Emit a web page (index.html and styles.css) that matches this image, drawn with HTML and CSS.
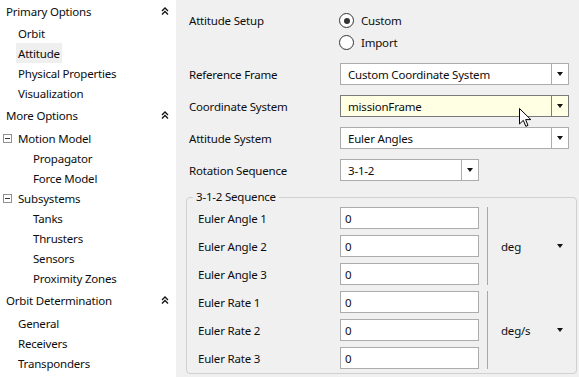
FILE: index.html
```html
<!doctype html>
<html lang="en">
<head>
  <meta charset="utf-8">
  <title>Attitude</title>
  <link rel="stylesheet" href="styles.css">
</head>
<body>
  <div class="app">
    <nav class="sidebar">
      <div class="section">
        <div class="section-head">
          <span>Primary Options</span>
          <svg class="collapse" width="8" height="8" viewBox="0 0 8 8"><path d="M1 4 L4 1 L7 4 M1 7.5 L4 4.5 L7 7.5"/></svg>
        </div>
        <div class="item"><span>Orbit</span></div>
        <div class="item active"><span>Attitude</span></div>
        <div class="item"><span>Physical Properties</span></div>
        <div class="item"><span>Visualization</span></div>
      </div>
      <div class="section">
        <div class="section-head">
          <span>More Options</span>
          <svg class="collapse" width="8" height="8" viewBox="0 0 8 8"><path d="M1 4 L4 1 L7 4 M1 7.5 L4 4.5 L7 7.5"/></svg>
        </div>
        <div class="item tree"><i class="minus"></i><span>Motion Model</span></div>
        <div class="item sub"><span>Propagator</span></div>
        <div class="item sub"><span>Force Model</span></div>
        <div class="item tree"><i class="minus"></i><span>Subsystems</span></div>
        <div class="item sub"><span>Tanks</span></div>
        <div class="item sub"><span>Thrusters</span></div>
        <div class="item sub"><span>Sensors</span></div>
        <div class="item sub"><span>Proximity Zones</span></div>
      </div>
      <div class="section">
        <div class="section-head">
          <span>Orbit Determination</span>
          <svg class="collapse" width="8" height="8" viewBox="0 0 8 8"><path d="M1 4 L4 1 L7 4 M1 7.5 L4 4.5 L7 7.5"/></svg>
        </div>
        <div class="item"><span>General</span></div>
        <div class="item"><span>Receivers</span></div>
        <div class="item"><span>Transponders</span></div>
      </div>
    </nav>

    <main class="panel">
      <div class="radio-row">
        <span class="field-label">Attitude Setup</span>
        <div class="radios">
          <div class="radio checked"><i class="circle"></i>Custom</div>
          <div class="radio"><i class="circle"></i>Import</div>
        </div>
      </div>

      <div class="field">
        <span class="field-label">Reference Frame</span>
        <div class="combo wide"><span class="value">Custom Coordinate System</span><span class="btn"><i class="arrow"></i></span></div>
      </div>
      <div class="field">
        <span class="field-label">Coordinate System</span>
        <div class="combo wide hover"><span class="value">missionFrame</span><span class="btn"><i class="arrow"></i></span></div>
      </div>
      <div class="field">
        <span class="field-label">Attitude System</span>
        <div class="combo wide"><span class="value">Euler Angles</span><span class="btn"><i class="arrow"></i></span></div>
      </div>
      <div class="field">
        <span class="field-label">Rotation Sequence</span>
        <div class="combo short"><span class="value">3-1-2</span><span class="btn"><i class="arrow"></i></span></div>
      </div>

      <fieldset class="group">
        <legend>3-1-2 Sequence</legend>
        <div class="block">
          <div class="rows">
            <div class="frow"><span>Euler Angle 1</span><div class="textbox">0</div></div>
            <div class="frow"><span>Euler Angle 2</span><div class="textbox">0</div></div>
            <div class="frow"><span>Euler Angle 3</span><div class="textbox">0</div></div>
          </div>
          <div class="sep"></div>
          <div class="unit"><span>deg</span><i class="arrow"></i></div>
        </div>
        <div class="block">
          <div class="rows">
            <div class="frow"><span>Euler Rate 1</span><div class="textbox">0</div></div>
            <div class="frow"><span>Euler Rate 2</span><div class="textbox">0</div></div>
            <div class="frow"><span>Euler Rate 3</span><div class="textbox">0</div></div>
          </div>
          <div class="sep"></div>
          <div class="unit"><span>deg/s</span><i class="arrow"></i></div>
        </div>
      </fieldset>
    </main>

    <svg class="cursor" width="13" height="20" viewBox="0 0 13 20"><path d="M0.5 0.5 L0.5 16 L4.3 12.3 L6.8 18.3 L9 17.4 L6.6 11.6 L11.8 11.6 Z"/></svg>
  </div>
</body>
</html>
```

FILE: styles.css
```css
body {
  margin: 0;
  font-family: "Noto Sans", "Open Sans", sans-serif;
  font-size: 11.5px;
  letter-spacing: -0.2px;
  color: #0d0d0d;
}
.app {
  display: flex;
  width: 579px;
  height: 377px;
  overflow: hidden;
  position: relative;
}

/* sidebar */
.sidebar {
  width: 176px;
  flex: none;
  background: #fff;
}
.section-head {
  height: 25px;
  box-sizing: border-box;
  padding: 0 7px 0 6px;
  display: flex;
  align-items: center;
  justify-content: space-between;
}
.section:first-child .section-head {
  height: 23px;
}
.collapse {
  margin-top: -1px;
}
.collapse path {
  fill: none;
  stroke: #111;
  stroke-width: 1.3;
}
.item {
  height: 20px;
  box-sizing: border-box;
  padding-top: 1px;
  padding-left: 16px;
  display: flex;
  align-items: center;
}
.item span {
  padding: 0 2px;
  line-height: 20px;
}
.item.active {
  padding-top: 0;
}
.item.active span {
  background: #efefef;
  padding-top: 1px;
  line-height: 19px;
}
.item.sub {
  padding-left: 31px;
}
.item.tree {
  padding-left: 3px;
}
.minus {
  width: 9px;
  height: 9px;
  box-sizing: border-box;
  border: 1px solid #919191;
  margin-right: 4px;
  position: relative;
}
.minus::after {
  content: "";
  position: absolute;
  left: 1px;
  top: 3px;
  width: 5px;
  height: 1px;
  background: #333;
}

/* main panel */
.panel {
  flex: 1;
  background: #f0f0f0;
  padding: 9px 0 0 13px;
  box-sizing: border-box;
}
.radio-row,
.field {
  display: grid;
  grid-template-columns: 151px auto;
  align-items: start;
}
.field {
  margin-top: 10px;
  align-items: center;
}
.field-label {
  height: 22px;
  box-sizing: border-box;
  padding-top: 2px;
  line-height: 20px;
}
.radio {
  height: 22px;
  box-sizing: border-box;
  padding-top: 1px;
  display: flex;
  align-items: center;
}
.circle {
  width: 15px;
  height: 15px;
  box-sizing: border-box;
  border: 1px solid #333;
  border-radius: 50%;
  background: #fff;
  margin-left: -1px;
  margin-right: 7px;
  display: flex;
  align-items: center;
  justify-content: center;
}
.radio.checked .circle::after {
  content: "";
  width: 6px;
  height: 6px;
  border-radius: 50%;
  background: #333;
}

.combo {
  display: flex;
  height: 22px;
  box-sizing: border-box;
  border: 1px solid #acacac;
  background: #fff;
}
.combo.wide {
  width: 229px;
}
.combo.short {
  width: 139px;
}
.combo.hover {
  background: #ffffe3;
  border-color: #7a7a7a;
}
.combo .value {
  flex: 1;
  padding: 1px 0 0 7px;
  line-height: 19px;
}
.combo .btn {
  width: 16px;
  border-left: 1px solid #acacac;
  display: flex;
  align-items: center;
  justify-content: center;
}
.combo.hover .btn {
  border-left-color: #7a7a7a;
}
.arrow {
  width: 0;
  height: 0;
  border-top: 4px solid #111;
  border-left: 3.5px solid transparent;
  border-right: 3.5px solid transparent;
}

/* sequence group */
.group {
  margin: 8px 2px 0 -3px;
  padding: 2px 0 4px 11px;
  border: 1px solid #d0d0d0;
  border-radius: 4px;
  min-width: 0;
}
.group legend {
  margin-left: -5px;
  padding: 0 3px;
  line-height: 16px;
}
.block {
  display: flex;
}
.block + .block {
  margin-top: 6px;
}
.rows {
  display: flex;
  flex-direction: column;
  gap: 6px;
}
.frow {
  display: grid;
  grid-template-columns: 142px 139px;
  align-items: center;
  height: 22px;
}
.frow > span {
  padding-top: 1px;
}
.textbox {
  height: 22px;
  box-sizing: border-box;
  border: 1px solid #acacac;
  background: #fff;
  padding: 1px 0 0 4px;
  line-height: 19px;
}
.sep {
  width: 1px;
  background: #a8a8a8;
  margin-left: 8px;
}
.unit {
  flex: 1;
  display: flex;
  align-items: center;
  justify-content: space-between;
  padding: 1px 13px 0 13px;
}
.unit .arrow {
  margin-top: -1px;
}

.cursor {
  position: absolute;
  left: 519px;
  top: 108px;
}
.cursor path {
  fill: #fff;
  stroke: #000;
  stroke-width: 1;
}
```
